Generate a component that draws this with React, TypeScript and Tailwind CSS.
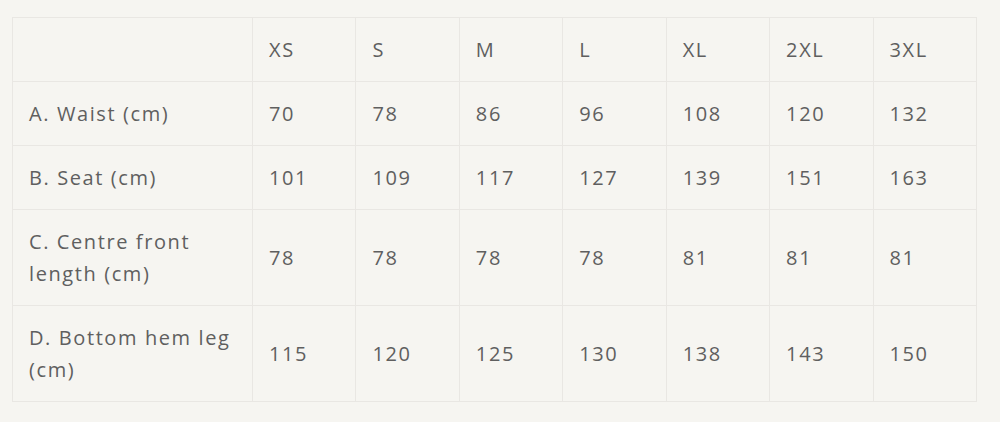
import React from "react";

const sizes = ["XS", "S", "M", "L", "XL", "2XL", "3XL"];
const rows: [string, (string | number)[]][] = [
  ["A. Waist (cm)", [70, 78, 86, 96, 108, 120, 132]],
  ["B. Seat (cm)", [101, 109, 117, 127, 139, 151, 163]],
  ["C. Centre front length (cm)", [78, 78, 78, 78, 81, 81, 81]],
  ["D. Bottom hem leg (cm)", [115, 120, 125, 130, 138, 143, 150]],
];

export default function App() {
  return (
    <div
      className="w-[1000px] h-[422px] bg-[#f6f5f1] pt-[17px] pl-[12px]"
      style={{ fontFamily: "'Open Sans', Lato, sans-serif" }}
    >
      <table className="border-collapse text-[20px] leading-[32px] tracking-[0.08em] text-[#5f5f5f] table-fixed w-[965px]">
        <colgroup>
          <col className="w-[240px]" />
          {sizes.map((s) => (
            <col key={s} />
          ))}
        </colgroup>
        <thead>
          <tr>
            <th className="border border-[#e9e7e3] px-4 py-[15.5px]"></th>
            {sizes.map((s) => (
              <th key={s} className="border border-[#e9e7e3] px-4 py-[15.5px] text-left font-normal align-middle">
                {s}
              </th>
            ))}
          </tr>
        </thead>
        <tbody>
          {rows.map(([label, vals]) => (
            <tr key={label}>
              <td className="border border-[#e9e7e3] pl-4 pr-2 py-[15.5px] align-middle">{label}</td>
              {vals.map((v, i) => (
                <td key={i} className="border border-[#e9e7e3] px-4 py-[15.5px] align-middle">
                  {v}
                </td>
              ))}
            </tr>
          ))}
        </tbody>
      </table>
    </div>
  );
}
